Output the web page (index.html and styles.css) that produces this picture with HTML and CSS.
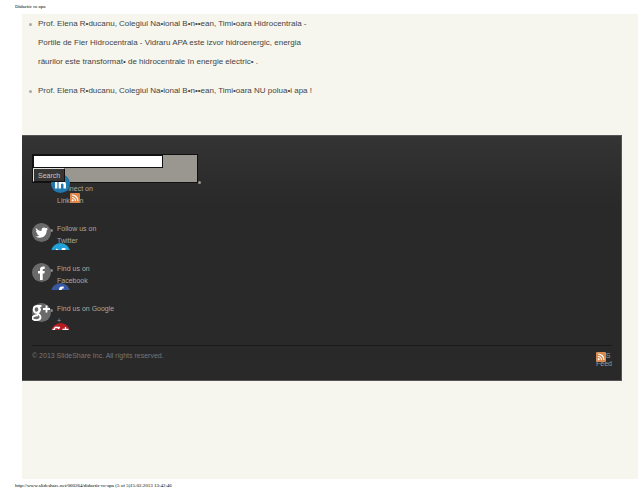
FILE: index.html
```html
<!DOCTYPE html>
<html lang="ro">
<head>
  <meta charset="UTF-8" />
  <meta name="viewport" content="width=device-width, initial-scale=1.0"/>
  <title>Didactic ro apa</title>
  <link rel="stylesheet" href="styles.css">
</head>
<body>
  <header class="page-title">Didactic ro apa</header>

  <main class="sheet">
    <ul class="comments">
      <li>Prof. Elena R•ducanu, Colegiul Na•ional B•n••ean, Timi•oara Hidrocentrala -<br>Portile de Fier Hidrocentrala - Vidraru APA este izvor hidroenergic, energia<br>râurilor este transformat• de hidrocentrale în energie electric• .</li>
      <li>Prof. Elena R•ducanu, Colegiul Na•ional B•n••ean, Timi•oara NU polua•i apa !</li>
    </ul>

    <footer class="footer">
      <form class="search">
        <input class="search-box" type="text" aria-label="Search">
        <button class="search-button" type="submit">Search</button>
      </form>

      <ul class="social">
        <li>
          <a href="#">Connect on<br>LinkedIn</a>
          <svg class="badge badge-linkedin" viewBox="0 0 19 19">
            <circle cx="9.5" cy="9.5" r="9.5" fill="#2078ad"/>
            <path d="M4 7.500h2.400v7H4zM4 4.500h2.400v2H4zM7.600 7.500H10v1c1.500-2 5-1.400 5 2v4h-2.500v-3.500c0-2-2.500-2-2.500 0v3.500H7.600z" fill="#fff"/>
          </svg>
          <svg class="rss rss-social" viewBox="0 0 10 10">
            <rect width="10" height="10" rx="1" fill="#e0884c"/>
            <circle cx="2.700" cy="7.300" r="1" fill="#fff"/>
            <path d="M2 4.500A3.500 3.500 0 0 1 5.500 8M2 2A6 6 0 0 1 8 8" fill="none" stroke="#fff" stroke-width="1.100"/>
          </svg>
        </li>
        <li>
          <svg class="icon" viewBox="0 0 19 19">
            <circle cx="9.5" cy="9.5" r="9.5" fill="#6a6a6a"/>
            <path d="M4 5c1.500 2 3.500 2.800 5.500 2.900C9 5 12 3.500 13.800 5.300l1.900-.7-1 1.500 1.400-.3-1.400 1.500C14.700 14 8.500 16.500 3.500 13.600c1.700.1 2.800-.3 3.800-1.100-1.200-.1-2-.8-2.400-1.900H6C4.700 10.100 4 9 4 7.700l1.100.3C3.900 7.200 3.500 6.200 4 5z" fill="#fff"/>
          </svg>
          <a href="#">Follow us on<br>Twitter</a>
          <svg class="badge badge-clipped" viewBox="0 0 19 7">
            <circle cx="9.5" cy="9.5" r="9.5" fill="#1fa3d8"/>
            <path d="M5 5.500L8 7H5zM10.500 7c0-2 2-2.500 3.500-1.500l1.500-.2L14 7z" fill="#fff"/>
          </svg>
        </li>
        <li>
          <svg class="icon" viewBox="0 0 19 19">
            <circle cx="9.5" cy="9.5" r="9.5" fill="#6a6a6a"/>
            <path d="M8 17V10.500H6V8h2V6.500C8 4.200 9.300 3.300 12.700 3.600V6c-1.700-.1-2 .1-2 1v1h2l-.3 2.500h-1.700V17z" fill="#fff"/>
          </svg>
          <a href="#">Find us on<br>Facebook</a>
          <svg class="badge badge-clipped" viewBox="0 0 19 7">
            <circle cx="9.5" cy="9.5" r="9.5" fill="#3859a0"/>
            <path d="M8 7c0-3 1.500-4 4.700-3.500V5.500c-1.500 0-2 .3-2 1.500z" fill="#fff"/>
          </svg>
        </li>
        <li>
          <svg class="icon" viewBox="0 0 19 19">
            <circle cx="9.5" cy="9.5" r="9.5" fill="#6a6a6a"/>
            <ellipse cx="4.500" cy="6.500" rx="2.800" ry="3.200" fill="none" stroke="#fff" stroke-width="1.900"/>
            <path d="M4.500 3h5M7 4.500c2 2 .5 4-1 5s2.500 2 2.500 4.500c0 4-8 4-8 1 0-2 3-3 5.500-2.600M11 6h7M14.500 2.500v7" fill="none" stroke="#fff" stroke-width="1.900"/>
          </svg>
          <a href="#">Find us on Google<br>+</a>
          <svg class="badge badge-clipped" viewBox="0 0 19 7">
            <circle cx="9.5" cy="9.5" r="9.5" fill="#b51f24"/>
            <path d="M1.500 6.500h2c0-3 3-3 4.500-.5M5 4.500h4M11.500 6.500h6M14.500 4v3" fill="none" stroke="#fff" stroke-width="1.300"/>
          </svg>
        </li>
      </ul>

      <div class="legal">
        <span>© 2013 SlideShare Inc. All rights reserved.</span>
        <a class="feed" href="#">RSS<br>Feed
          <svg class="rss rss-feed" viewBox="0 0 10 10">
            <rect width="10" height="10" rx="1" fill="#d98a50"/>
            <circle cx="2.700" cy="7.300" r="1" fill="#fff"/>
            <path d="M2 4.500A3.500 3.500 0 0 1 5.500 8M2 2A6 6 0 0 1 8 8" fill="none" stroke="#fff" stroke-width="1.100"/>
          </svg>
        </a>
      </div>
    </footer>
  </main>

  <div class="page-url">http://www.slideshare.net/060264/didactic-ro-apa (5 of 5)15.02.2013 13:42:46</div>
</body>
</html>
```
FILE: styles.css
```css
* {
  box-sizing: border-box;
}

body {
  display: flex;
  flex-direction: column;
  min-height: 100vh;
  margin: 0;
  background: #fff;
  color: #444;
  font-family: "Liberation Sans", Arial, sans-serif;
  font-size: 7px;
}

ul {
  margin: 0;
  padding: 0;
  list-style: none;
}

a {
  color: inherit;
  text-decoration: none;
}

.page-title,
.page-url {
  padding-left: 15px;
  color: #000;
  font-family: "Liberation Serif", "Times New Roman", serif;
  font-size: 5px;
  line-height: 14px;
}

.sheet {
  flex: 1;
  margin-left: 22px;
  background: #f6f6ee;
}

.comments {
  display: flex;
  flex-direction: column;
  gap: 10px;
  min-height: 121px;
  padding-left: 16px;
  font-size: 8px;
  line-height: 19px;
}

.comments li {
  position: relative;
}

/* small bullet in the margin */
.comments li::before {
  content: "";
  position: absolute;
  left: -9px;
  top: 9px;
  width: 3px;
  height: 3px;
  border-radius: 50%;
  background: #aaa;
}

.footer {
  margin-right: 16px;
  padding: 18px 9px 12px 10px;
  border: 1px solid #555;
  border-width: 1px 1px 1px 0;
  background: linear-gradient(#343434, #292929 70px);
  color: #aaa89f;
}

.search {
  position: relative;
  display: flex;
  flex-direction: column;
  align-items: flex-start;
  width: 166px;
  border: 1px solid #111;
  background: #999790;
}

/* bullet after the form */
.search::after {
  content: "";
  position: absolute;
  right: -4px;
  bottom: -2px;
  width: 3px;
  height: 3px;
  border-radius: 50%;
  background: #999790;
}

.search-box {
  width: 130px;
  height: 13px;
  padding: 0 2px;
  border: 1px solid #111;
  background: #fff;
  font-size: 7px;
}

/* stays above the LinkedIn badge */
.search-button {
  position: relative;
  z-index: 1;
  height: 14px;
  padding: 0 4px;
  border: 1px solid;
  border-color: #ddd #111 #111 #ddd;
  background: #383632;
  color: #c8c6bd;
  font-family: inherit;
  font-size: 7px;
}

.social {
  padding-bottom: 2px;
  line-height: 12px;
}

.social li {
  position: relative;
  display: flex;
  min-height: 40px;
  padding-left: 25px;
}

.icon {
  position: absolute;
  left: 0;
  top: 0;
  width: 19px;
  height: 19px;
}

.social li + li::before {
  content: "";
  position: absolute;
  left: 18px;
  top: 6px;
  width: 3px;
  height: 3px;
  border-radius: 50%;
  background: #888;
}

.badge {
  position: absolute;
  left: 19px;
  width: 19px;
}

.badge-linkedin {
  top: -9px;
  height: 19px;
}

.badge-clipped {
  top: 20px;
  height: 7px;
}

.rss {
  position: absolute;
  width: 10px;
  height: 10px;
}

.rss-social {
  left: 38px;
  top: 10px;
}

.legal {
  display: flex;
  justify-content: space-between;
  padding-top: 6px;
  border-top: 1px solid #1a1a1a;
  color: #777;
  line-height: 8px;
}

.feed {
  position: relative;
  color: #999;
}

.rss-feed {
  left: 0;
  top: 0;
}
```
